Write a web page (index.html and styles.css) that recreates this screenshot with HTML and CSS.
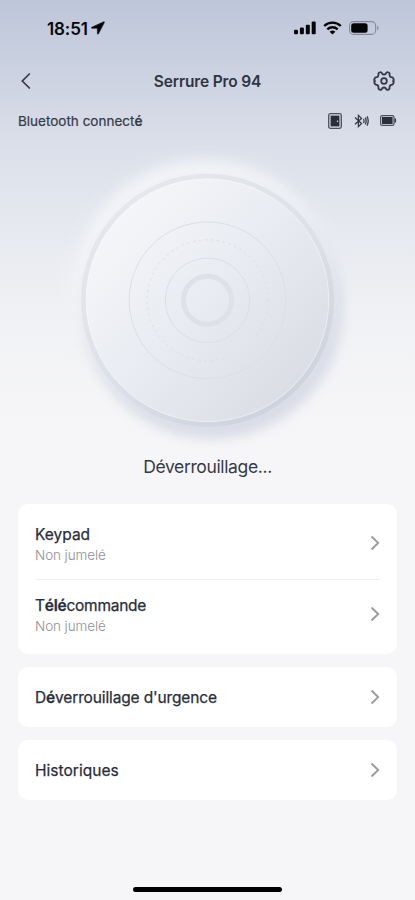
FILE: index.html
```html
<!DOCTYPE html>
<html lang="fr">
<head>
<meta charset="utf-8">
<meta name="viewport" content="width=device-width, initial-scale=1">
<title>Serrure Pro 94</title>
<link rel="stylesheet" href="styles.css">
</head>
<body>
<div class="screen">
  <div class="status-bar">
    <div class="clock">
      <span class="time">18:51</span>
      <svg width="14" height="14" viewBox="0 0 14 14"><path d="M12.8.7.8 6.2c-.7.4-.5 1.1.2 1.1h5.3l.1 5.3c0 .8.8.9 1.1.2l5.8-11.2c.3-.7 0-1.1-.5-.9Z" fill="#050608" stroke="#050608" stroke-width=".5"/></svg>
    </div>
    <div class="indicators">
      <svg width="22" height="14" viewBox="0 0 22 14" fill="#050608"><rect x="0" y="8.7" width="4" height="4.6" rx="1.1"/><rect x="5.9" y="6.5" width="4" height="6.8" rx="1.1"/><rect x="11.8" y="3.7" width="4" height="9.6" rx="1.1"/><rect x="17.7" y=".4" width="4" height="12.9" rx="1.1"/></svg>
      <svg width="19" height="14" viewBox="0 0 19 14" fill="none" stroke="#050608" stroke-width="2.4"><path d="M1.2 5a12 12 0 0 1 16.6 0"/><path d="M4.3 8.3a7.5 7.5 0 0 1 10.4 0"/><path d="M9.5 13.5 6.6 10.7q2.9-2.3 5.8 0Z" fill="#050608" stroke="none"/></svg>
      <svg width="30" height="14" viewBox="0 0 30 14"><rect x=".6" y=".6" width="26" height="12.8" rx="4" fill="none" stroke="#858b98" stroke-width="1.1"/><rect x="2.2" y="2.2" width="16.4" height="9.6" rx="2.5" fill="#050608"/><path d="M28.2 4.8c1.8.6 1.8 3.8 0 4.4Z" fill="#858b98"/></svg>
    </div>
  </div>

  <header class="nav">
    <svg class="back" width="12" height="18" viewBox="0 0 12 18"><path d="M9.8 1.5 2.3 9l7.5 7.5" fill="none" stroke="#343847" stroke-width="1.7"/></svg>
    <h1>Serrure Pro 94</h1>
    <svg class="gear" width="22" height="22" viewBox="0 0 22 22" fill="none" stroke="#343847" stroke-width="1.8" stroke-linejoin="round"><path d="M7.1 2.1 Q6.1 2.3 5.4 3.4 Q5.9 6.1 4 7.1 Q1.8 7 1.4 9.3 Q.9 10.4 2 11 Q.9 11.6 1.4 12.7 Q1.8 15 4 14.9 Q5.9 15.9 5.4 18.6 Q6.1 19.7 7.1 19.9 Q8.4 20.2 9.2 18.3 Q11 16.8 12.8 18.3 Q13.6 20.2 14.9 19.9 Q15.9 19.7 16.6 18.6 Q16.1 15.9 18 14.9 Q20.2 15 20.6 12.7 Q21.1 11.6 20 11 Q21.1 10.4 20.6 9.3 Q20.2 7 18 7.1 Q16.1 6.1 16.6 3.4 Q15.9 2.3 14.9 2.1 Q13.6 1.8 12.8 3.7 Q11 5.2 9.2 3.7 Q8.4 1.8 7.1 2.1Z"/><circle cx="11" cy="11" r="2.8"/></svg>
  </header>

  <div class="connection">
    <p>Bluetooth connect<b>é</b></p>
    <div class="device-icons">
      <svg width="14" height="16" viewBox="0 0 14 16"><rect x=".7" y=".7" width="12.6" height="14.6" rx="1.8" fill="none" stroke="#4b505d" stroke-width="1.3"/><rect x="2.6" y="2.6" width="8.8" height="10.8" fill="#292e3b"/><circle cx="9.5" cy="8.3" r=".8" fill="#dfe3ed"/></svg>
      <svg width="15" height="14" viewBox="0 0 15 14" fill="none" stroke="#343946" stroke-width="1.3"><path d="m1 3.6 6.5 6L4.4 12.6V1.4l3.1 3L1 10.2"/><path d="M9.5 5q1 2 0 4M11.3 3.6q1.7 3.4 0 6.8M13.1 2.4q2.2 4.6 0 9.2"/></svg>
      <svg width="17" height="11" viewBox="0 0 17 11"><rect x=".6" y=".6" width="13.4" height="9.8" rx="1.6" fill="none" stroke="#4b505d" stroke-width="1.2"/><rect x="2" y="2" width="10.6" height="7" fill="#292e3b"/><path d="M15.3 3.5v4" stroke="#343946" stroke-width="1.5"/></svg>
    </div>
  </div>

  <svg class="dial" width="415" height="310" viewBox="0 140 415 310">
    <defs>
      <linearGradient id="face" x1=".12" y1=".15" x2=".88" y2=".85">
        <stop offset="0" stop-color="#f5f6f9"/><stop offset=".5" stop-color="#e8ebf1"/><stop offset="1" stop-color="#dadde5"/>
      </linearGradient>
      <linearGradient id="rim" x1=".2" y1=".1" x2=".8" y2=".9">
        <stop offset="0" stop-color="#e5e7ec"/><stop offset=".55" stop-color="#dde0e7"/><stop offset="1" stop-color="#cfd3de"/>
      </linearGradient>
      <linearGradient id="edge" x1="0" y1="0" x2="1" y2="1">
        <stop offset="0" stop-color="#f9fafc"/><stop offset="1" stop-color="#e6e9ef"/>
      </linearGradient>
      <filter id="soft" x="-30%" y="-30%" width="160%" height="160%"><feGaussianBlur stdDeviation="6.5"/></filter>
    </defs>
    <circle cx="212" cy="308" r="129" fill="#d9dce7" filter="url(#soft)"/>
    <circle cx="204" cy="291" r="132" fill="#f3f4f7" filter="url(#soft)" opacity=".94"/>
    <circle cx="212" cy="308" r="128" fill="#d5d9e5" filter="url(#soft)" opacity=".55"/>
    <circle cx="207.5" cy="300.3" r="124" fill="url(#face)" stroke="url(#rim)" stroke-width="5"/>
    <circle cx="207.5" cy="300.3" r="121.2" fill="none" stroke="url(#edge)" stroke-width="1"/>
    <g fill="none" stroke="#dcdfe5">
      <circle cx="207.5" cy="300.3" r="78.3"/>
      <circle cx="207.5" cy="300.3" r="60.5" stroke-dasharray="2.4 3.6"/>
      <circle cx="207.5" cy="300.3" r="42.2"/>
      <circle cx="207.5" cy="300.3" r="24" stroke="#dee1e7" stroke-width="5"/>
    </g>
  </svg>

  <p class="state">Déverrouillage...</p>

  <main class="menu">
    <section class="card paired">
      <div class="row">
        <div><h2 class="keypad">Keypad</h2><p>Non jumelé</p></div>
        <svg class="chevron" width="10" height="16" viewBox="0 0 10 16"><path d="m1.5 1.5 6.7 6.5-6.7 6.5"/></svg>
      </div>
      <div class="row">
        <div><h2 class="remote">T<b>élé</b>commande</h2><p>Non jumelé</p></div>
        <svg class="chevron" width="10" height="16" viewBox="0 0 10 16"><path d="m1.5 1.5 6.7 6.5-6.7 6.5"/></svg>
      </div>
    </section>
    <section class="card single">
      <h2 class="urgent">D<b>é</b>verrouillage d'urgence</h2>
      <svg class="chevron" width="10" height="16" viewBox="0 0 10 16"><path d="m1.5 1.5 6.7 6.5-6.7 6.5"/></svg>
    </section>
    <section class="card single">
      <h2 class="history">Historiques</h2>
      <svg class="chevron" width="10" height="16" viewBox="0 0 10 16"><path d="m1.5 1.5 6.7 6.5-6.7 6.5"/></svg>
    </section>
  </main>
  <div class="home-bar"></div>
</div>
</body>
</html>
```
FILE: styles.css
```css
* { box-sizing: border-box; }
body, h1, h2, p { margin: 0; }
svg { display: block; flex: none; }
b { font-weight: 600; }
body { font-family: Inter, "Liberation Sans", sans-serif; color: #292d3a; }
.screen {
  width: 415px;
  height: 900px;
  overflow: hidden;
  display: flex;
  flex-direction: column;
  background: linear-gradient(#bdc6d9 0, #ced4e2 85px, #dce0ea 150px, #e5e8ef 220px, #f0f1f4 310px, #f6f6f8 420px);
}
.status-bar {
  height: 56px;
  padding: 0 36px 0 47px;
  display: flex;
  align-items: center;
  justify-content: space-between;
}
.clock { display: flex; align-items: center; gap: 3px; color: #050608; }
.time { font-size: 17px; line-height: 20px; padding-top: 1px; font-weight: 600; letter-spacing: -.1px; }
.indicators { display: flex; align-items: center; gap: 7px; }
.nav {
  height: 50px;
  padding: 0 20px;
  display: grid;
  grid-template-columns: 22px 1fr 22px;
  align-items: center;
}
.nav h1 {
  font-size: 15.5px;
  font-weight: 600;
  letter-spacing: -.15px;
  text-align: center;
  color: #303442;
}
.connection {
  height: 29px;
  padding: 0 18px;
  display: flex;
  align-items: center;
  justify-content: space-between;
}
.connection p { font-size: 13.5px; color: #363a47; -webkit-text-stroke: .2px #363a47; }
.device-icons { display: flex; align-items: center; gap: 11.5px; }
.dial { margin-top: 5px; }
.state {
  height: 34px;
  line-height: 34px;
  text-align: center;
  font-size: 17.5px;
  letter-spacing: -.36px;
  color: #363a47;
}
.menu {
  margin-top: 20px;
  padding: 0 18px;
  display: grid;
  gap: 13px;
}
.card { background: #fff; border-radius: 10px; padding: 0 17px; }
.paired { height: 150px; padding-top: 4px; }
.row {
  height: 71px;
  display: flex;
  align-items: center;
  justify-content: space-between;
}
.row > div { padding-top: 2px; }
.row + .row { border-top: 1px solid #f1f1f3; }
.row .chevron { margin-bottom: 1px; }
.row + .row .chevron { margin-bottom: 2px; }
.card h2 { font-size: 15.5px; line-height: 20px; font-weight: 400; -webkit-text-stroke: .25px #292d3a; }
.card .keypad { letter-spacing: 0; }
.card .remote { letter-spacing: -.25px; }
.card .urgent { letter-spacing: -.14px; padding-top: 1px; }
.card .history { letter-spacing: .03px; padding-top: 1px; }
.row p { font-size: 13.5px; line-height: 20px; font-weight: 300; letter-spacing: -.1px; color: #8f9095; }
.single {
  height: 60px;
  display: flex;
  align-items: center;
  justify-content: space-between;
}
.chevron path { fill: none; stroke: #98999e; stroke-width: 1.8; }
.home-bar {
  width: 149px;
  height: 5px;
  flex: none;
  border-radius: 3px;
  background: #000;
  margin: auto auto 8px;
}
```
